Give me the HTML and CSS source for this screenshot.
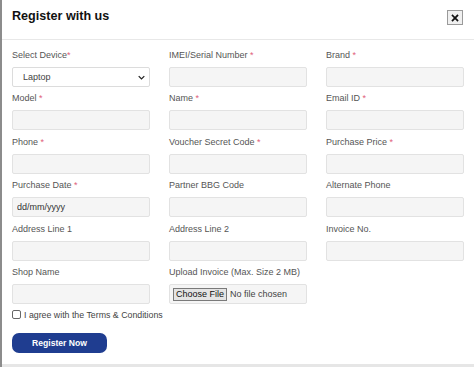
FILE: index.html
```html
<!DOCTYPE html>
<html lang="en">
<head>
<meta charset="utf-8">
<title>Register with us</title>
<link rel="stylesheet" href="styles.css">
</head>
<body>
<div class="screen">
  <div class="modal">
    <div class="modal-header">
      <h1 class="modal-title">Register with us</h1>
      <button class="close" type="button" aria-label="Close">
        <svg viewBox="0 0 10 10" width="8" height="8"><path d="M2 2 L8 8 M8 2 L2 8" stroke="#111" stroke-width="2.2" stroke-linecap="square"/></svg>
      </button>
    </div>
    <form class="modal-body">
      <div class="grid">
        <div class="field">
          <label class="lbl">Select Device<span class="req">*</span></label>
          <div class="select-wrap">
            <select class="ctl select"><option>Laptop</option></select>
            <svg class="chev" viewBox="0 0 10 6" width="7" height="5"><path d="M1 1 L5 5 L9 1" fill="none" stroke="#222" stroke-width="1.8"/></svg>
          </div>
        </div>
        <div class="field">
          <label class="lbl">IMEI/Serial Number <span class="req">*</span></label>
          <input class="ctl" type="text">
        </div>
        <div class="field">
          <label class="lbl">Brand <span class="req">*</span></label>
          <input class="ctl" type="text">
        </div>

        <div class="field">
          <label class="lbl">Model <span class="req">*</span></label>
          <input class="ctl" type="text">
        </div>
        <div class="field">
          <label class="lbl">Name <span class="req">*</span></label>
          <input class="ctl" type="text">
        </div>
        <div class="field">
          <label class="lbl">Email ID <span class="req">*</span></label>
          <input class="ctl" type="text">
        </div>

        <div class="field">
          <label class="lbl">Phone <span class="req">*</span></label>
          <input class="ctl" type="text">
        </div>
        <div class="field">
          <label class="lbl">Voucher Secret Code <span class="req">*</span></label>
          <input class="ctl" type="text">
        </div>
        <div class="field">
          <label class="lbl">Purchase Price <span class="req">*</span></label>
          <input class="ctl" type="text">
        </div>

        <div class="field">
          <label class="lbl">Purchase Date <span class="req">*</span></label>
          <input class="ctl date" type="text" placeholder="dd/mm/yyyy">
        </div>
        <div class="field">
          <label class="lbl">Partner BBG Code</label>
          <input class="ctl" type="text">
        </div>
        <div class="field">
          <label class="lbl">Alternate Phone</label>
          <input class="ctl" type="text">
        </div>

        <div class="field">
          <label class="lbl">Address Line 1</label>
          <input class="ctl" type="text">
        </div>
        <div class="field">
          <label class="lbl">Address Line 2</label>
          <input class="ctl" type="text">
        </div>
        <div class="field">
          <label class="lbl">Invoice No.</label>
          <input class="ctl" type="text">
        </div>

        <div class="field">
          <label class="lbl">Shop Name</label>
          <input class="ctl" type="text">
        </div>
        <div class="field">
          <label class="lbl">Upload Invoice (Max. Size 2 MB)</label>
          <div class="ctl file">
            <span class="file-btn">Choose File</span>
            <span class="file-name">No file chosen</span>
          </div>
        </div>
      </div>
      <label class="agree"><span class="box"></span>I agree with the Terms &amp; Conditions</label>
      <button class="submit" type="button">Register Now</button>
    </form>
  </div>
</div>
</body>
</html>
```
FILE: styles.css
```css
* { box-sizing: border-box; }
html, body { margin: 0; padding: 0; }
body {
  font-family: "Liberation Sans", Arial, sans-serif;
  background: #e6e6e6;
}
.screen {
  width: 474px;
  height: 367px;
  display: flex;
  align-items: flex-start;
  background: #e6e6e6;
  border-left: 2px solid #8c8c8c;
  overflow: hidden;
}
.modal {
  width: 472px;
  height: 364px;
  background: #fff;
}
.modal-header {
  height: 40px;
  border-bottom: 1px solid #e8e8e8;
  display: flex;
  justify-content: space-between;
  align-items: flex-start;
  padding: 0 11px 0 10px;
}
.modal-title {
  margin: 9px 0 0;
  font-size: 12.6px;
  line-height: 15px;
  font-weight: bold;
  color: #111;
}
.close {
  margin-top: 10px;
  width: 16px;
  height: 15px;
  padding: 0;
  border: 1px solid #9a9a9a;
  background: #f0f0f0;
  display: flex;
  align-items: center;
  justify-content: center;
}
.close svg { display: block; }
.modal-body {
  padding: 8.5px 10px 0;
  margin: 0;
}
.grid {
  display: grid;
  grid-template-columns: 138px 138px 138px;
  column-gap: 19px;
  row-gap: 5.5px;
}
.field { display: flex; flex-direction: column; }
.lbl {
  font-size: 9px;
  line-height: 13px;
  color: #555;
  margin-bottom: 5px;
  white-space: nowrap;
}
.req { color: #e0607a; }
.ctl {
  display: block;
  width: 138px;
  height: 20px;
  margin: 0;
  border: 1px solid #e2e2e2;
  border-radius: 2px;
  background: #f5f5f5;
  font-family: "Liberation Sans", Arial, sans-serif;
  font-size: 9px;
  color: #333;
  padding: 0 4px;
  outline: none;
}
.date::placeholder { color: #333; }
.select-wrap { position: relative; width: 138px; }
.select {
  appearance: none;
  -webkit-appearance: none;
  background: #fff;
  border-color: #dcdcdc;
  padding-left: 10px;
  color: #444;
}
.chev {
  position: absolute;
  right: 5px;
  top: 8px;
}
.file {
  display: flex;
  align-items: center;
  gap: 3px;
  padding: 0 3px;
}
.file-btn {
  font-size: 9px;
  line-height: 11px;
  padding: 0 2px;
  border: 1px solid #7a7a7a;
  background: #e4e4e4;
  color: #111;
}
.file-name { font-size: 9px; color: #444; }
.agree {
  display: flex;
  align-items: center;
  gap: 3px;
  margin-top: 4px;
  height: 13px;
  font-size: 8.8px;
  color: #444;
}
.box {
  width: 9px;
  height: 9px;
  border: 1px solid #666;
  border-radius: 2px;
  background: #fff;
}
.submit {
  display: block;
  margin-top: 11.5px;
  width: 95px;
  height: 20px;
  border: none;
  border-radius: 7px;
  background: #1f3d90;
  color: #fff;
  font-family: "Liberation Sans", Arial, sans-serif;
  font-size: 8.6px;
  font-weight: bold;
  padding: 0;
}
```
